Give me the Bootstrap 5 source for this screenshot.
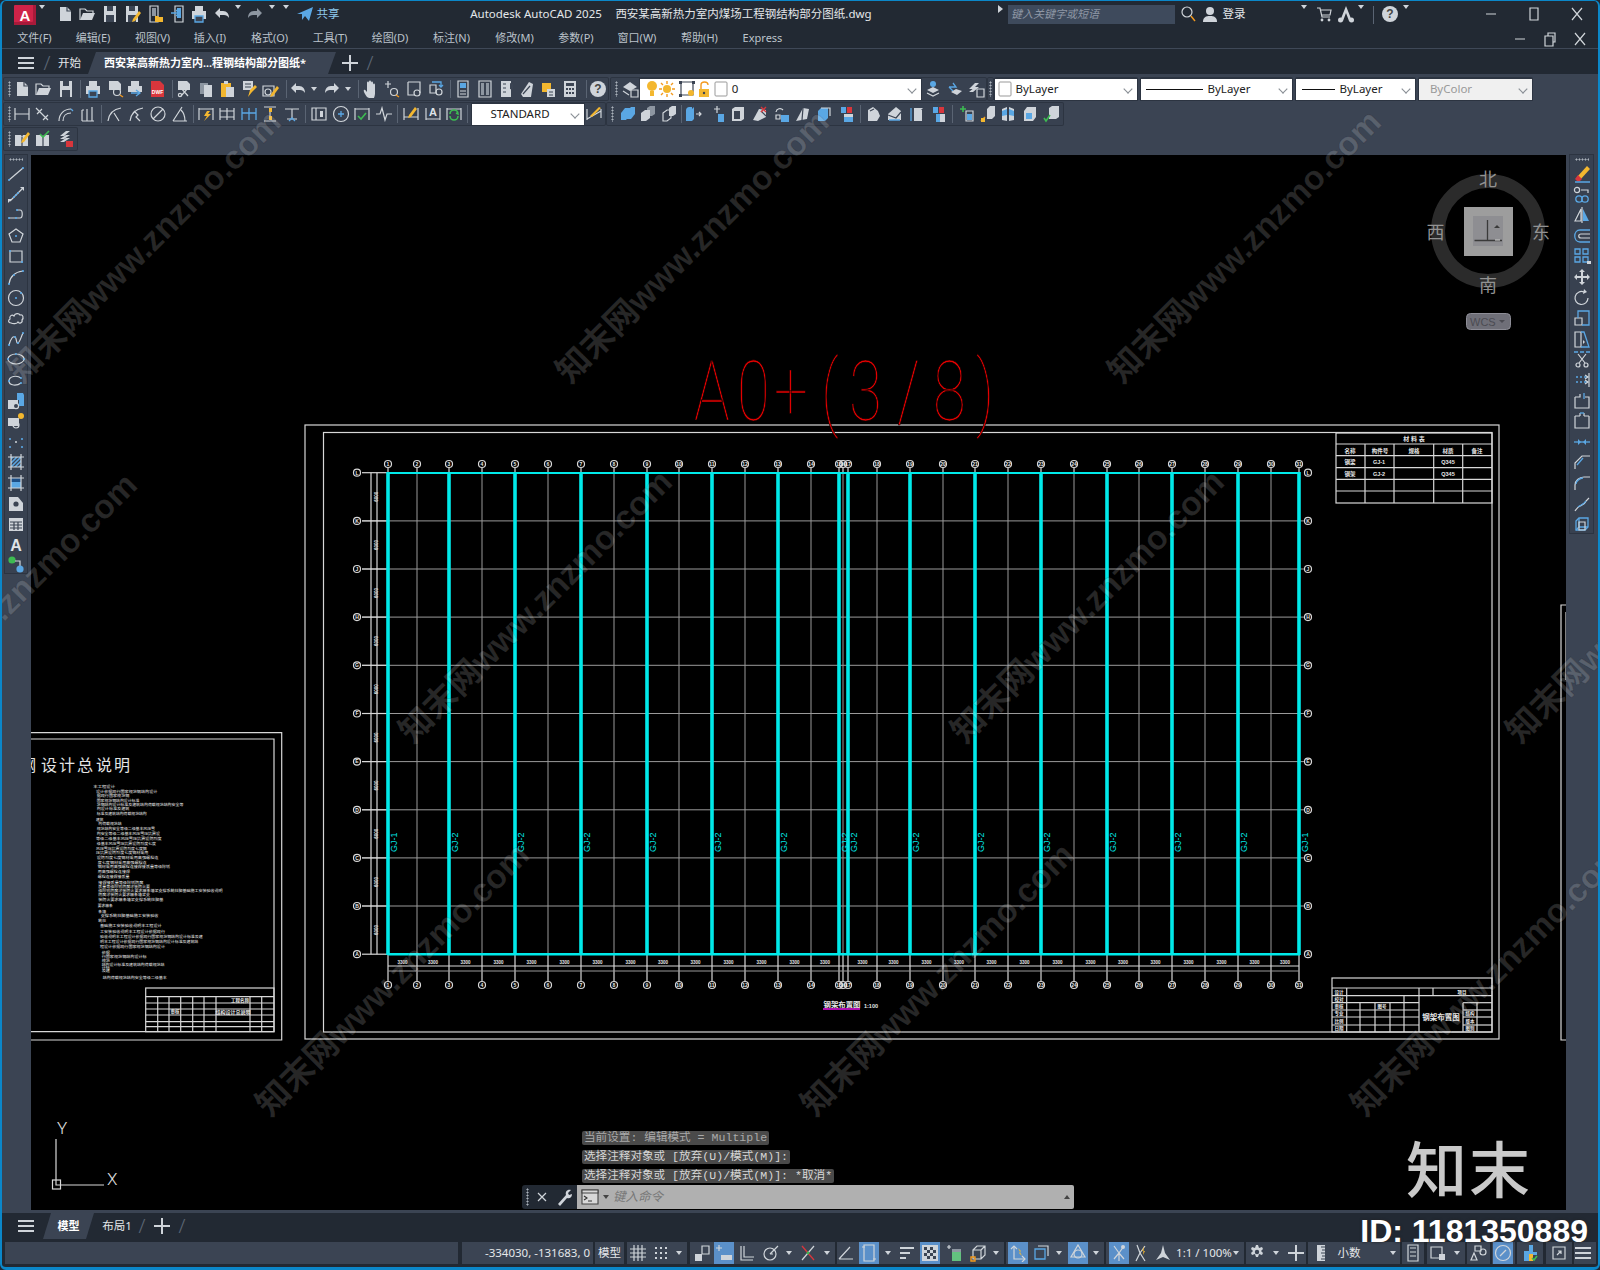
<!DOCTYPE html>
<html lang="zh">
<head>
<meta charset="UTF-8" />
<title>Autodesk AutoCAD 2025</title>
<link rel="stylesheet" href="https://cdn.jsdelivr.net/npm/bootstrap@5.3.2/dist/css/bootstrap.min.css" />
<style>
  html, body { width: 1600px; height: 1270px; overflow: hidden; background: #222933; }
  body { font-family: "Noto Sans", "Noto Sans CJK SC", sans-serif; font-size: 11.5px; color: #d4d9df; }
  .cad-win { width: 1600px; height: 1270px; position: relative; overflow: hidden; background: #222933; border: solid #0b87c9; border-width: 1px 2px 3px 2px; border-radius: 6px; }
  .h-title { height: 28px; } .h-menu { height: 19px; } .h-tabs { height: 25px; padding-top: 3px; }
  .menu-line { height: 1px; background: #3f4857; }
  .tools { height: 81px; background: #3b4453; padding-top: 4px; }
  .tool-row { height: 22px; margin-bottom: 3px; }
  .tool-grp { height: 22px; background: #384150; box-shadow: 0 0 0 1px #2c3441; border-radius: 1px; }
  .cell { flex: none; display: flex; align-items: center; justify-content: center; height: 100%; white-space: nowrap; }
  .cell svg { display: block; flex: none; }
  .cell-on { background: #5b90c9; }
  .cell-sep { background: #5a6473; height: 18px; align-self: center; }
  .grip { width: 3px; height: 16px; align-self: center; background-image: radial-gradient(#a9b1ba 45%, transparent 50%); background-size: 3px 3px; }
  .caret-dn { width: 0; height: 0; border: 3.5px solid transparent; border-top: 4px solid #cfd4da; border-bottom: 0; }
  .tri-rt { display: block; width: 0; height: 0; border: 4px solid transparent; border-left: 5px solid #cfd4da; border-right: 0; }
  .combo-box { height: 21px; width: 100%; background: #fff; color: #222; display: flex; align-items: center; position: relative; font-size: 11.5px; box-shadow: 0 0 0 1px #2c3441; }
  .combo-off { background: #f0f0f0; color: #999; }
  .combo-chev { position: absolute; right: 6px; top: 7px; width: 6px; height: 6px; border: solid #8a8f96; border-width: 0 1px 1px 0; transform: rotate(45deg) scale(1.1); }
  .combo-rule { height: 1px; background: #111; flex: none; }
  .cad-main { height: 1055px; }
  .side-strip { background: #3b4453; flex: none; }
  .side-l { width: 29px; padding: 0 4px 0 3px; }
  .side-r { width: 32px; padding: 0 5px 0 4px; }
  .side-l .cell { margin-left: -1px; }
  .side-bar { background: #384150; box-shadow: 0 0 0 1px #2c3441; padding-top: 3px; }
  .side-bar .grip-h { width: 14px; height: 3px; margin: 0 auto 4px; background-image: radial-gradient(#a9b1ba 45%, transparent 50%); background-size: 3px 3px; }
  .side-bar .cell { height: 18px; margin-bottom: 2.6px; }
  .cad-canvas { width: 1535px; height: 1055px; background: #000; position: relative; overflow: hidden; flex: none; }
  .cad-canvas > svg { display: block; }
  .strip { height: 3px; background: #3b4453; }
  .h-ltabs { height: 26px; }
  .status { height: 28px; padding-top: 3px; }
  .stat-grp { height: 22px; background: #3b4453; }
  .tab-on { height: 100%; background: #3b4453; clip-path: polygon(8px 0, 100% 0, calc(100% - 8px) 100%, 0 100%); color: #fff; font-weight: 600; font-size: 11px; display: flex; align-items: center; justify-content: center; }
  .tab-file { padding-right: 14px; }
  .slash { color: #5c6674; font-size: 20px; font-weight: 300; }
  .cad-logo { width: 22px; height: 20px; background: #cf2348; color: #fff; font: bold 15px "Liberation Sans", sans-serif; display: flex; align-items: center; justify-content: center; box-shadow: inset -3px -3px 0 #a81a3a; border-radius: 1px; }
  .find-box { width: 167px; height: 19px; background: #3e4a5c; color: #8e97a5; font-style: italic; font-size: 11px; display: flex; align-items: center; padding-left: 3px; }
  .share-txt { color: #8cc8ec; } .title-txt { color: #e4e7ea; }
  .menu-txt { color: #bcc3cb; font-size: 11px; }
  .ln-cad { stroke: #d8d8d8; stroke-width: 1.2; fill: none; }
  .ln-gry { stroke: #9a9a9a; stroke-width: 1; }
  .ln-cyan { stroke: #00eaea; }
  .txt-cad { fill: #e8e8e8; font-family: "Liberation Sans", "Noto Sans CJK SC", sans-serif; font-weight: 700; }
  .txt-note { fill: #f0f0f0; font-family: "Noto Sans CJK SC", sans-serif; font-size: 3.8px; font-weight: 400; }
  .txt-big { fill: #e4e4e4; font-family: "Noto Sans CJK SC", sans-serif; font-size: 16px; }
  .txt-a0 { fill: #e80000; stroke: #000; stroke-width: .7px; font-family: Roboto, sans-serif; font-weight: 100; font-size: 83px; }
  .txt-label { fill: #00e6e6; font-family: "Liberation Sans", sans-serif; font-size: 9px; }
  .txt-cube { fill: #929292; font-family: "Noto Sans CJK SC", sans-serif; font-size: 18px; text-anchor: middle; }
  .txt-ucs { fill: #e0e0e0; font-family: Roboto, sans-serif; font-weight: 300; font-size: 17px; }
  .txt-wcs { fill: #4b4b52; font: 11px "Liberation Sans", sans-serif; }
  .cmd-float { position: absolute; left: 491px; bottom: 1px; }
  .cmd-hist { margin: 0 0 2px 60px; gap: 5px; font: 11.6px "Liberation Mono", "Noto Sans CJK SC", monospace; }
  .cmd-line { height: 14px; line-height: 14px; padding: 0 2px; background: #4a4a4a; color: #d6d6d6; border-radius: 2px; white-space: pre; }
  .cmd-dim { color: #a9a9a9; }
  .cmd-tools { width: 55px; height: 24px; background: #222933; border-radius: 3px 0 0 3px; }
  .cmd-tools .grip { height: 18px; }
  .cmd-input { width: 497px; height: 24px; background: #b0b0b0; color: #777; border-radius: 0 2px 2px 0; font-style: italic; font-size: 12.5px; position: relative; }
  .cmd-input .caret-dn { border-top-color: #444; }
  .cmd-up { position: absolute; right: 4px; top: 10px; width: 0; height: 0; border: 3.5px solid transparent; border-bottom: 4px solid #444; border-top: 0; }
  .wm-layer { position: absolute; left: -2px; top: -1px; pointer-events: none; z-index: 5; }
  .wm-txt { fill: rgba(255, 255, 255, .17); stroke: rgba(0, 0, 0, .12); stroke-width: 1px; font: 700 33.5px "Liberation Sans", "Noto Sans CJK SC", sans-serif; }
  .stamp-cn { position: absolute; right: 66px; top: 1129px; font: 500 61px/1.2 "Noto Sans CJK SC", sans-serif; color: #c9c9c9; z-index: 6; letter-spacing: 2px; }
  .stamp-id { position: absolute; right: 10px; top: 1211px; font: 700 32px/1.2 "Liberation Sans", sans-serif; color: #fff; z-index: 6; white-space: nowrap; text-shadow: 0 0 3px #222; }
  .i-s { fill: none; stroke: #d0d5da; stroke-width: 1.2; }
  .i-f { fill: #cfd4da; }
  .i-b { fill: #5aa7e4; }
  .i-sb { fill: none; stroke: #5aa7e4; stroke-width: 1.3; }
  .i-y { fill: #f3b72f; }
  .i-o { fill: none; stroke: #f39a1e; stroke-width: 1.4; }
  .i-r { fill: #d8363c; }
  .i-rs { fill: none; stroke: #d8363c; stroke-width: 1.3; }
  .i-k { fill: #3b4453; }
  .i-n { fill: none; stroke: #3b4453; stroke-width: 1.2; }
  .i-g { fill: none; stroke: #3dbb52; stroke-width: 1.6; }
  .i-m { fill: #8d96a1; }
  .i-w { font: 700 5px "Liberation Sans", sans-serif; fill: #fff; }
  .i-big { font: 700 16px "Liberation Sans", sans-serif; fill: #dfe3e8; }
  .i-mid { font: 700 11px "Liberation Sans", sans-serif; fill: #dfe3e8; }
  .i-q { font: 700 12px "Liberation Sans", sans-serif; fill: #444; }
  .i-con { fill: #d8d8d8; stroke: #444; stroke-width: 1.1; }
  .i-conl { fill: none; stroke: #333; stroke-width: 1.1; }
</style>
</head>
<body>
<div class="cad-win" id="win"></div>
<script src="https://cdn.jsdelivr.net/npm/bootstrap@5.3.2/dist/js/bootstrap.bundle.min.js"></script>
<script>
// ---- icons, 18x18 ----
const P = (d, c = 's') => `<path class="i-${c}" d="${d}"/>`;
const D = (...pts) => pts.map(p => `<circle class="i-b" cx="${p[0]}" cy="${p[1]}" r="1.1"/>`).join('');
const dim = (x) => P('M2 3v12M16 3v12', 's') + x;
const PEN = P('M10 14l6-8 2 2-6 8-3 1z', 'y');
const SAVE = P('M3 1h12v16H3z', 'f') + P('M6 1h6v5H6zM5 10h8v7H5z', 'k');
const I = {
  new: P('M4 2h7l4 4v10H4z', 'f') + P('M11 2v4h4', 'n'),
  open: P('M2 15V4h5l2 2h6v2', 's') + P('M2 15l3-7h12l-3 7z', 'f'),
  save: SAVE, saveas: SAVE + PEN,
  webopen: P('M4 1h8v16H4z', 's') + P('M6 3h4v8H6z', 'm') + P('M9 11h3l1 1h4v5H9z', 'y'),
  websave: P('M6 1h8v16H6z', 's') + P('M8 3h4v10H8z', 'b') + P('M2 8h7M7 5l3 3-3 3', 'sb'),
  print: P('M5 1h8v5H5z', 'f') + P('M2 6h14v8H2z', 'f') + P('M5 11h8v6H5z', 'k') + P('M5 11h8v6H5z', 'sb'),
  undo: P('M7 3L2 8l5 5v-3h4c2 0 4 1 5 3 0-4-2-7-6-7H7z', 'f'),
  redo: P('M11 3l5 5-5 5v-3H7c-2 0-4 1-5 3 0-4 2-7 6-7h3z', 'f'),
  redod: P('M11 3l5 5-5 5v-3H7c-2 0-4 1-5 3 0-4 2-7 6-7h3z', 'm'),
  share: P('M1 9L17 2l-4 14-4-5-3 4v-6z', 'b'),
  find: `<circle class="i-s" cx="8" cy="7" r="5"/>` + P('M12 11l4 5', 'o'),
  user: `<circle class="i-f" cx="9" cy="6" r="4"/>` + P('M2 17c0-5 3-6 7-6s7 1 7 6z', 'f'),
  cart: P('M2 3h3l2 9h8M5 5h11l-1 5H7', 's') + `<circle class="i-f" cx="7" cy="15" r="1.4"/><circle class="i-f" cx="14" cy="15" r="1.4"/>`,
  aca: P('M9 1l6 15h-3L9 8l-3 8H3z', 'f') + `<circle class="i-f" cx="3.5" cy="15" r="2.5"/><circle class="i-f" cx="14.5" cy="15" r="2.5"/>`,
  help: `<circle class="i-f" cx="9" cy="9" r="8"/><text x="9" y="13" text-anchor="middle" class="i-q">?</text>`,
  min: P('M4 9h10'), max: P('M5 3h8v12H5z'), close: P('M4 3l10 12M14 3L4 15'),
  rest: P('M4 6h8v10H4zM7 6V3h7v9h-2'),
  burger: `<path class="i-f" d="M1 3h16v2H1zM1 8h16v2H1zM1 13h16v2H1z"/>`,
  x: P('M5 5l8 8M13 5l-8 8', 's'), plus: `<path class="i-f" d="M8 1h2v7h7v2h-7v7H8v-7H1V8h7z"/>`,
  preview: P('M3 1h9l3 3v6H3z', 'f') + `<circle class="i-s" cx="11" cy="12" r="3.5"/>` + P('M14 15l3 2', 'o'),
  publish: P('M5 1h8v5H5z', 'f') + P('M2 6h14v6H2z', 'f') + P('M5 13h8M10 10l4 3-4 3', 'sb'),
  dwf: P('M3 1h9l4 4v12H3z', 'r') + `<text x="9.5" y="14" text-anchor="middle" class="i-w">DWF</text>`,
  cut: P('M3 1h9l3 3v6H3z', 'f') + P('M6 8l7 8M13 8l-7 8', 's') + `<circle class="i-s" cx="5" cy="15" r="1.6"/>`,
  copy: P('M3 3h8v11H3z', 'm') + P('M7 5h8v12H7z', 'f'),
  paste: P('M3 3h10v14H3z', 'y') + P('M6 1h4v3H6z', 'f') + P('M8 7h8v10H8z', 'f'),
  match: P('M3 1h10v9H3z', 'f') + P('M5 4h6M5 7h6', 'n') + P('M8 17l2-7 5-5 2 2-5 5z', 'y'),
  block: P('M2 6h11v10H2z', 's') + `<circle class="i-s" cx="7" cy="12" r="3"/>` + PEN,
  hand: P('M5 17c-2-3-4-6-3-7s2 1 3 2V3c0-2 2-2 2 0v4-5c0-2 2-2 2 0v5-4c0-2 2-2 2 0v5-3c0-2 2-2 2 0v8c0 3-1 5-2 7z', 'f'),
  zrt: P('M5 1v7M2 4h6') + `<circle class="i-s" cx="11" cy="12" r="3.5"/>` + P('M13 15l3 2', 'o'),
  zwin: P('M3 2h12v11', 's') + P('M3 2v13h6') + `<circle class="i-s" cx="12" cy="13" r="3"/>`,
  zprev: P('M3 5h6v8H3z') + `<circle class="i-s" cx="12" cy="12" r="3"/>` + P('M5 2h9v5M12 5l2 2 2-2', 'sb'),
  props: P('M4 1h10v16H4z', 's') + P('M6 3h6v5H6z', 'b') + P('M6 11h6M6 14h6'),
  dcen: P('M3 1h12v16H3z', 's') + P('M5 3h3v12H5zM10 3h3v12h-3z', 'm'),
  tools: P('M4 1h10v16H4z', 'f') + P('M6 4h3M6 8h3M6 12h3', 'n') + P('M13 3l3 1v6l-3-1z', 'k'),
  sheet: P('M3 14L11 2l4 2-2 13H5z', 'f') + P('M5 14l7-8', 'n'),
  mark: P('M3 3h9v9H3z', 'y') + P('M8 9h8v8H8z', 'f') + P('M10 12h4M10 15h4', 'n'),
  calc: P('M3 1h12v16H3z', 'f') + P('M5 3h8v3H5z', 'k') + P('M5 8h2v2H5zM8 8h2v2H8zM11 8h2v2h-2zM5 12h2v2H5zM8 12h2v2H8zM11 12h2v2h-2z', 'k'),
  layer: P('M2 7l7-5 7 5-7 4z', 'f') + P('M10 10h7v7h-7z', 's') + P('M2 11l6 4', 's'),
  bulb: `<circle class="i-y" cx="9" cy="6" r="5"/>` + P('M7 11h4v5H7z', 'y'),
  sun: `<circle class="i-y" cx="9" cy="9" r="4"/>` + P('M9 1v3M9 14v3M1 9h3M14 9h3M3 3l2 2M13 13l2 2M15 3l-2 2M5 13l-2 2', 'o'),
  frz: P('M3 2h12v13H3z', 'n') + P('M1 1h3v3H1zM14 1h3v3h-3zM1 14h3v3H1z', 'k') + `<circle class="i-y" cx="13" cy="13" r="3"/>`,
  lock: P('M3 9h10v8H3z', 'y') + P('M5 9V5c0-4 7-4 7 0', 'o') + `<circle class="i-k" cx="8" cy="13" r="1.2"/>`,
  sq: `<rect x="3" y="2" width="12" height="14" rx="1" fill="#fff" stroke="#999"/>`,
  lay1: `<circle class="i-b" cx="9" cy="4" r="3"/>` + P('M3 10l6-3 6 3-6 3z', 'f') + P('M3 13l6 3 6-3', 's'),
  lay2: P('M3 7h7L7 3M3 7l4 4', 'sb') + P('M5 12l5-3 6 2-5 4z', 'f'),
  lay3: P('M2 9l6-6h4l-6 6zM2 12l6-5h4l-6 5z', 'f') + P('M10 9h7v8h-7z', 's'),
  dl: dim(P('M2 9h14')), da: P('M2 3l12 12M3 9l5-5M9 15l5-5'),
  darc: P('M2 16c0-7 5-12 12-12M6 16c0-5 3-8 8-8') + P('M14 4l2 2', 'sb'),
  dord: P('M3 16h12M3 16V5M8 4v12M13 2v14M3 5h2'),
  drad: P('M2 16C3 8 8 4 15 3M8 8l5 8'),
  djog: P('M2 16C3 8 8 4 15 3M6 6l4 4-2 2 4 4'),
  ddia: `<circle class="i-s" cx="9" cy="9" r="7"/>` + P('M4 14L14 4'),
  dang: P('M2 16L11 2M2 16h14M10 5c3 3 4 7 4 11'),
  dq: dim(P('M2 4h14', 's') + P('M10 6l-3 5h3l-3 5 7-7h-3l2-3z', 'y')),
  dbase: dim(P('M2 6h14M9 3v12M2 12h14')),
  dcont: P('M2 3v12M9 3v12M16 3v12M2 8h14', 'sb'),
  dbreak: P('M3 2h12M3 16h12', 's') + P('M8 3h3v4H8zM8 11h3v4H8z', 'y') + P('M9 7v4', 's'),
  dtol: P('M2 4h14M9 4v10M4 14h10') + P('M6 16l3-3 3 3', 'sb'),
  dtol2: P('M2 3h14v12H2z') + P('M6 3v12') + P('M10 6h3v6h-3z', 'f'),
  dcen2: `<circle class="i-s" cx="9" cy="9" r="7.5"/>` + P('M9 6v6M6 9h6', 'sb'),
  dins: dim(P('M2 4h14') + P('M5 11l3 3 5-6', 'g')),
  jog: P('M1 9h4l2-6 3 12 2-6h5'),
  dedit: dim(P('M2 12h14') + P('M7 10l6-8 2 2-6 8-3 1z', 'y')),
  dtedit: dim(P('M2 14h14') + `<text x="9" y="11" text-anchor="middle" class="i-mid">A</text>`),
  dupd: dim(P('M2 4h14') + P('M5 9a4 4 0 0 1 8 0l-2-1M13 11a4 4 0 0 1-8 0', 'g')),
  dstyle: P('M2 14l14-8M2 4v11M16 4v9') + P('M5 11l9-9 2 1-9 9z', 'y'),
  c1: P('M2 8l4-5h5v7l-4 5H2z', 'b') + P('M8 6l4-4h4v7l-4 5H8z', 'b'),
  c2: P('M8 3l3-2h5v8l-3 2H8z', 'm') + P('M2 8l4-3h5v8l-4 3H2z', 'f'),
  c3: P('M9 3l3-2h4v8l-3 2H9z', 'f') + P('M3 8l4-3h4v8l-4 3H3z', 's'),
  c4: P('M2 16V5c0-2 2-3 3-3h3v14zM8 4l2-2v12l-2 2z', 'b') + P('M12 9h5M15 7l2 2-2 2', 's'),
  c5: P('M9 1v7M6 4h6', 's') + P('M10 9h6v8h-6z', 'b'),
  c6: P('M3 4l3-2h9v12l-3 2H3z', 'f') + P('M5 6h6v8H5z', 'k'),
  c7: P('M2 15L8 4l7 1v7L7 16z', 'f') + P('M10 6l5 5', 'n') + P('M10 2l5 5M15 2l-5 5', 'rs'),
  c8: P('M3 7a4 4 0 0 1 7-2', 's') + P('M8 10h8v7H8z', 'b') + P('M3 10h4v4H3z', 's'),
  c9: P('M2 16L9 3l6 1-2 10z', 'f') + P('M9 3l-1 12', 'n') + P('M4 14l5 3', 'b'),
  c10: P('M3 6l3-3h7v10l-3 3H3z', 'b') + P('M6 3h9v8', 's'),
  c11: P('M3 2h5v6H3z', 'b') + P('M9 2h5v6H9z', 'r') + P('M6 9h9v8H6z', 'b') + P('M6 9h9v3H6z', 'f'),
  c12: P('M3 15V5l5-3 5 4 2 5-3 5H3z', 'f') + P('M5 6l4-2', 'n'),
  c13: P('M2 15V9l8-7 5 4v9z', 'f') + P('M2 10l8 3 5-6', 'n') + P('M3 15h11', 'sb'),
  c14: P('M6 3h9l-2 2H6z', 'f') + P('M6 5h8v11H6z', 'f') + P('M3 3v13', 'sb'),
  c15: P('M3 2h5v6H3z', 'b') + P('M9 2h5v6H9z', 'r') + P('M6 9h9v8H6z', 'f') + P('M6 9h4v8H6z', 'b'),
  c16: P('M6 1v6M3 4h6', 'g') + P('M9 6h7v10H9z', 's') + P('M10 9h5v6h-5z', 'b'),
  c17: P('M8 4l3-3h5v10l-3 3H8z', 'f') + P('M2 16l4-4', 'o') + P('M2 13h4v4H2z', 'y'),
  c18: P('M3 4l5-2v14l-5-1zM10 2l5 2v11l-5 1z', 'f') + P('M3 6l5-2v6l-5 1z', 'b') + P('M10 4l5 2v5l-5-1z', 'b'),
  c19: P('M3 6l3-4h9v10l-3 4H3z', 'f') + P('M5 8h6v6H5z', 'b'),
  c20: P('M6 3l3-2h7v11l-3 2H6z', 'f') + P('M1 13l2 3 4-6', 'g'),
  m1: P('M2 5h6l1 2 1-2h5v11H2z', 'f') + P('M9 7v9', 'n') + P('M9 10l6-8 2 2-6 8-3 1z', 'y'),
  m2: P('M2 5h6l1 2 1-2h5v11H2z', 'f') + P('M9 7v9', 'n') + P('M6 4l3 3 6-6', 'g'),
  m3: P('M3 6l6-5h4l-6 5zM3 9l6-4h4l-6 4zM3 12l6-4h4l-6 4z', 'f') + P('M9 11h7v6H9z', 'r'),
  grid: P('M5 1v16M9 1v16M13 1v16M1 5h16M1 9h16M1 13h16'),
  dots: `<path class="i-f" d="M3 3h2v2H3zM8 3h2v2H8zM13 3h2v2h-2zM3 8h2v2H3zM8 8h2v2H8zM13 8h2v2h-2zM3 13h2v2H3zM8 13h2v2H8zM13 13h2v2h-2z"/>`,
  snap: P('M9 2h7v8H9z', 's') + P('M2 10h7v7H2z', 'f'),
  infer: P('M4 1v6M1 4h6') + P('M6 11h11v5H6z', 'f'),
  ortho: P('M3 2v14h12') + P('M6 2v11h10'),
  polar: `<circle class="i-s" cx="9" cy="10" r="6"/>` + P('M9 10l8-8M12 10h-3', 's'),
  osnap: P('M3 2l12 14', 'rs') + P('M3 16L15 2', 's') + `<circle class="i-g" cx="9" cy="9" r="0.6"/>`,
  angle: P('M2 15L13 3M2 15h14'),
  iso: P('M4 1h10v16H4z', 's') + P('M2 3h3M13 15h3'),
  lw: `<path class="i-f" d="M2 3h14v2H2zM2 8h10v2H2zM2 13h6v2H2z"/>`,
  trans: P('M1 1h16v16H1z', 'f') + P('M3 3h3v3H3zM9 3h3v3H9zM6 6h3v3H6zM12 6h3v3h-3zM3 9h3v3H3zM9 9h3v3H9zM6 12h3v3H6zM12 12h3v3h-3z', 'k'),
  cycle: P('M1 3h4M3 1v4') + P('M6 5h9v12H6z', 'm') + `<path d="M6 8h9v9H6z" fill="#63c17f"/>`,
  iso3d: P('M3 6l4-4h8v9l-4 4H3zM3 6h8v9M11 6l4-4') + P('M1 13h4v4H1z', 'o'),
  ucs: P('M5 2v13h11') + P('M2 5l3-3 3 3M13 12l3 3-3 3', 's') + P('M9 4l3 3-2 2 3 3', 'y'),
  ucs2: P('M3 5h10v10H3z', 'sb') + P('M6 2h10v10', 's'),
  gizmo: P('M9 1l7 12H2z') + `<circle class="i-s" cx="9" cy="10" r="4"/>`,
  anno: P('M9 17V9M9 9L4 2M9 9l5-7M9 9l5 6M9 9l-5 6', 's') + `<circle class="i-f" cx="13" cy="3" r="2"/>`,
  anno2: P('M4 17l4-8 5 8M8 9L5 1M8 9l5-7', 's') + P('M12 2l-2 5h3l-2 4', 'y'),
  anno3: P('M9 1l2 8 5 7-7-3-7 3 5-7z', 'f'),
  gear: P('M8 1h2l1 3 3-1 1 2-2 2 2 2-1 2-3-1-1 3H8l-1-3-3 1-1-2 2-2-2-2 1-2 3 1z', 'f') + `<circle class="i-k" cx="9" cy="8" r="2.2"/>`,
  ruler: P('M5 1h8v16H5z', 'f') + P('M9 3h4M10 6h3M9 9h4M10 12h3M9 15h4', 'n'),
  list: P('M4 1h10v16H4z', 's') + P('M6 4h6M6 8h6M6 12h6', 's'),
  wspace: P('M2 3h11v11H2z', 's') + P('M10 10h6v6h-6z', 'f'),
  hw: P('M6 2h6v5H6z', 's') + `<circle class="i-s" cx="14" cy="8" r="3"/>` + P('M5 9l3 7H2z', 's'),
  isol: `<circle class="i-s" cx="9" cy="9" r="7.5"/>` + P('M6 12l6-6', 's'),
  prop2: P('M8 1h4v7h4v3h-4v2H8zM3 7h5v10H3z', 'b') + P('M8 10h4v7H8z', 'y') + P('M11 14l2 2 3-4', 'g'),
  full: P('M3 3h12v12H3z', 's') + P('M7 11l4-4M8 7h3v3', 's'),
  console: P('M1 2h16v14H1z', 'con') + P('M1 2h16v3H1z', 'con') + P('M3 8l3 2-3 2M7 13h4', 'conl'),
  wrench: P('M3 16L11 7c-1-3 1-6 5-5l-3 3 1 2 3-1c0 4-3 5-5 4l-7 8z', 'f'),
  line: P('M2 15L16 3', 's') + D([2, 15], [16, 3]),
  cline: P('M3 15L15 3', 's') + `<path class="i-f" d="M13 1h4v4zM1 17v-4h4z"/>` + D([7, 11], [11, 7], [9, 9]),
  pline: P('M2 12h7M10 4h3c3 0 3 8 0 8h-4', 's') + D([2, 12], [9, 12], [10, 4]),
  polyg: P('M9 2l7 5-3 8H5L2 7z', 's') + D([9, 9]),
  rect: P('M3 4h12v11H3z', 's') + D([3, 4], [15, 15]),
  arc: P('M2 16C3 8 8 4 16 3', 's') + D([2, 16], [16, 3], [7, 7]),
  circle: `<circle class="i-s" cx="9" cy="9" r="7.5"/>` + D([9, 9], [14, 4]),
  cloud: P('M4 14c-3 0-3-3-1-4-1-3 2-5 4-3 1-3 5-3 6-1 3-1 4 3 2 5 1 3-3 4-4 2-1 2-5 2-7 1z', 's'),
  spline: P('M2 15c2-7 4-9 6-8s1 7 3 6 3-6 5-10', 's') + D([2, 15], [8, 7], [11, 13], [16, 3]),
  ellip: `<ellipse class="i-s" cx="9" cy="9" rx="8" ry="5"/>` + D([1, 9], [17, 9], [9, 4]),
  earc: P('M14 12c-4 3-12 3-12-2s8-6 12-3', 's') + D([14, 12], [14, 7], [2, 10]),
  ins: P('M1 8h10v9H1z', 'f') + `<circle class="i-k" cx="9" cy="14" r="2.6"/><circle class="i-s" cx="9" cy="14" r="2.6"/>` + P('M10 1h6l1 2v11h-5V8h-2z', 'b'),
  mkblk: P('M1 6h11v8H1z', 'f') + `<circle class="i-s" cx="9" cy="13" r="3"/>` + `<circle class="i-y" cx="14" cy="4" r="3"/>`,
  point: D([3, 6], [15, 6], [3, 14], [15, 14]) + `<circle class="i-f" cx="9" cy="9" r="1"/>`,
  hatch: P('M4 4h10v10H4z', 'b') + P('M4 8l4-4M4 12l8-8M6 14l8-8M10 14l4-4', 'n') + P('M1 4h16M1 14h16M4 1v16M14 1v16'),
  grad: `<rect x="4" y="4" width="10" height="10" fill="#5aa7e4"/><rect x="4" y="4" width="10" height="4" fill="#1d4f86"/>` + P('M1 4h16M1 14h16M4 1v16M14 1v16'),
  region: P('M2 2h9l5 6v8H2z', 'f') + `<circle class="i-k" cx="9" cy="9" r="2.6"/>`,
  table: P('M2 3h14v13H2z', 'f') + P('M3 7h12M3 10h12M3 13h12M7 7v8M11 7v8', 'n'),
  mtext: `<text x="9" y="15" text-anchor="middle" class="i-big">A</text>`,
  addsel: `<circle cx="5" cy="4" r="3.6" fill="#3dbb52"/>` + P('M8 5h5v5', 's') + `<circle class="i-b" cx="13" cy="13" r="3.6"/>`,
  erase: P('M4 12L14 1l3 3-10 11z', 'y') + P('M2 14l3-4 4 4-2 2H4z', 'r') + P('M2 17h15', 'sb'),
  rcopy: `<circle class="i-s" cx="4" cy="4" r="2.6"/>` + P('M8 4h7v3', 's') + `<circle class="i-sb" cx="6" cy="13" r="3.2"/><circle class="i-sb" cx="12" cy="13" r="3.2"/>`,
  mirror: P('M2 15L8 3v12z', 's') + P('M10 3l6 12h-6z', 'b') + P('M9 1v16', 's'),
  offset: P('M17 3H7c-7 0-7 12 0 12h10', 'sb') + P('M17 7H8c-3 0-3 4 0 4h9', 's'),
  array: P('M2 2h5v5H2zM10 2h5v5h-5zM2 10h5v5H2zM10 10h5v5h-5z', 'sb') + P('M14 14h4v3h-4z', 'f'),
  move: P('M9 1l3 3h-2v4h4V6l3 3-3 3v-2h-4v4h2l-3 3-3-3h2v-4H4v2L1 9l3-3v2h4V4H6z', 'f'),
  rot: P('M15 9a6.5 6.5 0 1 1-4-6', 's') + P('M11 0l3 3-4 2z', 'f'),
  scale: P('M2 9h7v7H2z', 's') + P('M5 9V2h11v14H9', 'sb'),
  stretch: P('M2 2h6v15H2z', 's') + P('M8 2h3l5 15H8', 'sb') + P('M5 12h7M10 10l2 2-2 2', 'f'),
  trim: P('M1 2h4M7 2h4M13 2h4', 'sb') + P('M5 4l7 9M13 4l-7 9', 's') + `<circle class="i-s" cx="5" cy="15" r="2"/><circle class="i-s" cx="13" cy="15" r="2"/>`,
  ext: P('M16 2v14', 's') + P('M3 6h2M7 6h2M11 6h4M3 11h2M7 11h2M11 11h4', 'sb') + P('M12 4l3 2-3 2M12 9l3 2-3 2', 's'),
  brkp: P('M2 5h5v-3M2 5v11h14V5h-4', 's') + P('M11 1v6', 'sb'),
  brk: P('M2 4v12h14V4', 's') + P('M2 4h5M11 4h5M7 4V1M11 4V1', 's') + P('M7 1h4', 'sb'),
  join: P('M1 9h16', 'sb') + P('M5 6l3 3-3 3zM13 6l-3 3 3 3z', 'b'),
  chamf: P('M2 16v-6l7-7h8', 's') + P('M4 12l6-7', 'sb'),
  fil: P('M2 16v-5c0-4 4-8 9-8h6', 's') + P('M3 10c0-3 4-6 7-6', 'sb'),
  blend: P('M2 16c2-3 3-4 5-5s5-2 6-5l3-3', 's') + P('M5 12c3-2 6-3 8-6', 'sb'),
  expl: P('M3 6l3-3h9v9l-3 3H3z', 'sb') + P('M6 3v9l-3 3M6 12h9', 'sb') + P('M6 7h6v8H6z', 's'),
};
function svg(n) { return `<svg width="18" height="18" viewBox="0 0 18 18" aria-hidden="true">${I[n] || ''}</svg>`; }

// one run of cells placed by the x of their centres; the gaps between them are computed
function cells(x0, items) {
  let cur = x0, out = '';
  for (const it of items) {
    const [cx, n, w0, raw] = it;
    let w = 18, cls = 'cell', inner = '';
    if (n === '|') { w = 1; cls += ' cell-sep'; }
    else if (n === 'v') { w = 7; inner = '<span class="caret-dn"></span>'; }
    else if (n === '::') { w = 3; cls = 'grip flex-none'; }
    else if (n === 'txt') { w = w0; inner = raw; }
    else if (n.endsWith('*')) { w = 20; cls += ' cell-on'; inner = svg(n.slice(0, -1)); }
    else inner = svg(n);
    const ml = +(cx - w / 2 - cur).toFixed(1);
    out += `<div class="${cls}" style="margin-left:${ml}px;width:${w}px">${inner}</div>`;
    cur = cx + w / 2;
  }
  return out;
}
function row(groups, cls, grpCls) {
  let cur = 2, out = '';
  for (const [a, b, items] of groups) {
    out += `<div class="d-flex flex-none ${grpCls}" style="margin-left:${+(a - cur).toFixed(1)}px;width:${b - a}px">${cells(a, items)}</div>`;
    cur = b;
  }
  return `<div class="d-flex ${cls}">${out}</div>`;
}
const T = (cx, w, txt, c = '') => [cx, 'txt', w, `<span class="${c}">${txt}</span>`];
const CHEV = '<span class="combo-chev"></span>';
const combo = (cx, w, inner, off) => [cx, 'txt', w, `<div class="combo-box ${off ? 'combo-off' : ''}">${inner}${CHEV}</div>`];
const rule = (ml, w) => `<span class="combo-rule" style="margin-left:${ml}px;width:${w}px"></span>`;

const titleBar = row([[2, 1598, [
  [25, 'txt', 22, '<div class="cad-logo">A</div>'], [42, 'v'],
  [65, 'new'], [87, 'open'], [110, 'save'], [132, 'saveas'], [155, 'webopen'], [178, 'websave'], [199, 'print'],
  [222, 'undo'], [238, 'v'], [255, 'redod'], [272, 'v'], [286, 'v'], [305, 'share'], T(328, 24, '共享', 'share-txt'),
  T(536, 134, 'Autodesk AutoCAD 2025', 'title-txt'), T(743.5, 251, '西安某高新热力室内煤场工程钢结构部分图纸.dwg', 'title-txt'),
  [1000, 'txt', 5, '<span class="tri-rt"></span>'],
  [1091.5, 'txt', 167, '<div class="find-box">键入关键字或短语</div>'],
  [1188, 'find'], [1210, 'user'], T(1234, 24, '登录', 'title-txt'), [1304, 'v'], [1324, 'cart'], [1346, 'aca'], [1361, 'v'], [1373, '|'], [1390, 'help'], [1406, 'v'],
  [1491, 'min'], [1534, 'max'], [1577, 'close'],
]]], 'h-title align-items-center', '');
const menuItems = [[34.5, 36, '文件(F)'], [93, 36, '编辑(E)'], [152.5, 38, '视图(V)'], [210, 34, '插入(I)'], [269.5, 40, '格式(O)'], [330, 36, '工具(T)'], [390, 38, '绘图(D)'], [451.5, 40, '标注(N)'], [514.5, 42, '修改(M)'], [576, 37, '参数(P)'], [637, 43, '窗口(W)'], [699.5, 38, '帮助(H)'], [762.5, 44, 'Express']];
const menuBar = row([[2, 1598, menuItems.map(m => T(m[0], m[1], m[2], 'menu-txt')).concat([[1520, 'min'], [1550, 'rest'], [1580, 'close']])]], 'h-menu', '');
const tabBar = row([[2, 1598, [
  [26, 'burger'], T(47, 8, '/', 'slash'), T(69.5, 24, '开始', 'title-txt'),
  [212, 'txt', 248, '<div class="tab-on tab-file w-100">西安某高新热力室内...程钢结构部分图纸*</div>'],
  [320, 'x'], [350, 'plus'], T(370, 8, '/', 'slash'),
]]], 'h-tabs', '');

const layerCombo = combo(780.5, 281, cells(640, [[652, 'bulb'], [667, 'sun'], [687, 'frz'], [705, 'lock'], [721, 'sq'], T(735, 8, '0')]));
const row1 = row([
  [4, 608, [[9, '::'], [22, 'new'], [43, 'open'], [66, 'save'], [80, '|'], [93, 'print'], [115, 'preview'], [135, 'publish'], [157, 'dwf'], [172, '|'], [184, 'cut'], [206, 'copy'], [227, 'paste'], [249, 'match'], [270, 'block'], [286, '|'], [298, 'undo'], [314, 'v'], [332, 'redo'], [348, 'v'], [358, '|'], [371, 'hand'], [392, 'zrt'], [414, 'zwin'], [436, 'zprev'], [450, '|'], [463, 'props'], [485, 'dcen'], [506, 'tools'], [527, 'sheet'], [548, 'mark'], [570, 'calc'], [586, '|'], [598, 'help']]],
  [611, 986, [[616, '::'], [630, 'layer'], layerCombo, [933, 'lay1'], [955, 'lay2'], [976, 'lay3']]],
  [988, 993, [[990, '::']]],
  [995, 1137, [combo(1066, 142, cells(995, [[1005, 'sq'], T(1037, 44, 'ByLayer')]))]],
  [1141, 1292, [combo(1216.5, 151, rule(5, 57) + cells(1203, [T(1229, 44, 'ByLayer')]))]],
  [1296, 1415, [combo(1355.5, 119, rule(6, 33) + cells(1335, [T(1361, 44, 'ByLayer')]))]],
  [1419, 1532, [combo(1475.5, 113, cells(1419, [T(1451, 44, 'ByColor')]), true)]],
], 'tool-row', 'tool-grp');
const row2 = row([
  [4, 605, [[9, '::'], [22, 'dl'], [43, 'da'], [66, 'darc'], [88, 'dord'], [101, '|'], [115, 'drad'], [137, 'djog'], [158, 'ddia'], [180, 'dang'], [193, '|'], [206, 'dq'], [227, 'dbase'], [249, 'dcont'], [270, 'dbreak'], [292, 'dtol'], [305, '|'], [319, 'dtol2'], [341, 'dcen2'], [362, 'dins'], [384, 'jog'], [397, '|'], [411, 'dedit'], [433, 'dtedit'], [454, 'dupd'], [467, '|'],
    combo(528, 112, '<span class="w-100 text-center pe-3">STANDARD</span>'), [594, 'dstyle']]],
  [607, 1063, [[612, '::'], [628, 'c1'], [648, 'c2'], [669, 'c3'], [681, '|'], [693, 'c4'], [717, 'c5'], [738, 'c6'], [760, 'c7'], [782, 'c8'], [803, 'c9'], [824, 'c10'], [847, 'c11'], [860, '|'], [874, 'c12'], [895, 'c13'], [917, 'c14'], [939, 'c15'], [952, '|'], [966, 'c16'], [988, 'c17'], [1008, 'c18'], [1030, 'c19'], [1052, 'c20']]],
], 'tool-row', 'tool-grp');
const row3 = row([[4, 77, [[9, '::'], [22, 'm1'], [43, 'm2'], [66, 'm3']]]], 'tool-row', 'tool-grp');

const sideBar = (names, h) => `<div class="side-bar" style="height:${h}px"><div class="grip-h"></div>${names.map(n => `<div class="cell">${svg(n)}</div>`).join('')}</div>`;
const leftBar = sideBar(['line', 'cline', 'pline', 'polyg', 'rect', 'arc', 'circle', 'cloud', 'spline', 'ellip', 'earc', 'ins', 'mkblk', 'point', 'hatch', 'grad', 'region', 'table', 'mtext', 'addsel'], 418);
const rightBar = sideBar(['erase', 'rcopy', 'mirror', 'offset', 'array', 'move', 'rot', 'scale', 'stretch', 'trim', 'ext', 'brkp', 'brk', 'join', 'chamf', 'fil', 'blend', 'expl'], 378);

// ---- the drawing, in page coordinates ----
const S = [];
const L = (x1, y1, x2, y2, c = 'ln-cad', w) => S.push(`<line x1="${x1}" y1="${y1}" x2="${x2}" y2="${y2}" class="${c}"${w ? ` stroke-width="${w}"` : ''}/>`);
const R = (x1, y1, x2, y2) => S.push(`<rect x="${x1}" y="${y1}" width="${x2 - x1}" height="${y2 - y1}" class="ln-cad"/>`);
const TX = (x, y, size, t, anchor = 'middle', extra = '') => S.push(`<text x="${x}" y="${y}" font-size="${size}" text-anchor="${anchor}" class="txt-cad" ${extra}>${t}</text>`);

R(305, 425, 1499, 1039); R(323.5, 432.5, 1492, 1032);
const cols = [388, 417, 449, 482, 515, 548, 581, 614, 647, 679, 712, 745, 778, 811, 839, 843, 848, 877, 910, 943, 975, 1008, 1041, 1074, 1107, 1139, 1172, 1205, 1238, 1271, 1299];
const cyan = new Set([388, 449, 515, 581, 647, 712, 778, 839, 848, 910, 975, 1041, 1107, 1172, 1238, 1299]);
const rows = Array.from({ length: 11 }, (_, k) => +(472.7 + 48.15 * k).toFixed(1));
rows.forEach((y, k) => {
  if (k && k < 10) L(362, y, 1304, y, 'ln-gry');
  L(362, y, 388, y, 'ln-cad');
  S.push(`<circle cx="357" cy="${y}" r="3.5" class="ln-cad"/><circle cx="1308" cy="${y}" r="3.5" class="ln-cad"/>`);
  TX(357, y + 1.8, 5, 'ABCDEFGHJKL'[10 - k]); TX(1308, y + 1.8, 5, 'ABCDEFGHJKL'[10 - k]);
  if (k < 10) TX(376, y + 26, 4.5, '6000', 'middle', `transform="rotate(-90 376 ${y + 24})"`);
});
L(371, 472.7, 371, 954.3); L(377, 472.7, 377, 954.3);
cols.forEach((x, i) => {
  if (!cyan.has(x)) L(x, 473, x, 954, 'ln-gry');
  L(x, 468, x, 473); L(x, 954, x, 981);
  S.push(`<circle cx="${x}" cy="464" r="3.5" class="ln-cad"/><circle cx="${x}" cy="985" r="3.5" class="ln-cad"/>`);
  TX(x, 466, 5, i + 1); TX(x, 987, 5, i + 1);
  if (i < cols.length - 1 && cols[i + 1] - x > 8) TX((x + cols[i + 1]) / 2, 964, 4.5, '3300');
});
L(388, 966, 1299, 966); L(388, 971, 1299, 971, 'ln-gry');
L(388, 473, 1300, 473, 'ln-cyan', 2.2);
L(388, 954.3, 1300, 954.3, 'ln-cyan', 2.4);
cyan.forEach(x => L(x, 472, x, 955, 'ln-cyan', 3.6));
[...cyan].forEach((x, i, a) => S.push(`<text class="txt-label" transform="translate(${x + 9} 852) rotate(-90)">${i === 0 || i === a.length - 1 ? 'GJ-1' : 'GJ-2'}</text>`));

// sheet title
TX(842, 1006.5, 7.4, '钢架布置图');
S.push('<line x1="823" y1="1009" x2="860" y2="1009" stroke="#e814e8" stroke-width="1.6"/>');
TX(871, 1008, 5.5, '1:100');

// material table, top right
S.push('<rect x="1336" y="433" width="156" height="70" class="ln-cad"/>');
[444, 455.7, 467.7, 479.3, 491].forEach(y => L(1336, y, 1492, y));
[1365, 1394, 1433.7, 1462.7].forEach(x => L(x, 444, x, 503));
TX(1414, 441, 6, '材 料 表');
['名称', '构件号', '规格', '材质', '备注'].forEach((t, i) => TX([1350, 1380, 1414, 1448, 1477][i], 452.5, 5.5, t));
[['钢梁', 'GJ-1', 'Q345'], ['钢架', 'GJ-2', 'Q345']].forEach((r, i) => { const y = 464 + i * 11.8; TX(1350, y, 5.5, r[0]); TX(1379, y, 5.5, r[1]); TX(1448, y, 5.5, r[2]); });

// title block, bottom right
S.push('<rect x="1332" y="978" width="160" height="54" class="ln-cad"/>');
L(1332, 988, 1492, 988); L(1332, 995.7, 1492, 995.7); L(1332, 1002.7, 1419, 1002.7); L(1463, 1002.7, 1492, 1002.7);
L(1332, 1010, 1419, 1010); L(1332, 1017, 1419, 1017); L(1332, 1025, 1419, 1025); L(1463, 1010, 1492, 1010); L(1463, 1017, 1492, 1017); L(1463, 1025, 1492, 1025);
L(1346.7, 988, 1346.7, 1032); L(1404, 995.7, 1404, 1032); L(1419, 988, 1419, 1032); L(1433, 988, 1433, 995.7);
[1360, 1375, 1390].forEach(x => L(x, 1002.7, x, 1032)); [1463, 1477].forEach(x => L(x, 1002.7, x, 1032));
TX(1441, 1020, 7.5, '钢架布置图');
[['设计', 1339, 994], ['校对', 1339, 1001], ['审核', 1339, 1008], ['专业', 1339, 1015], ['比例', 1339, 1023], ['日期', 1339, 1030], ['图号', 1382, 1008], ['结构', 1470, 1015], ['版本', 1470, 1023], ['图别', 1470, 1030], ['项目', 1462, 994]].forEach(t => TX(t[1], t[2], 4.5, t[0]));

// left sheet
S.push(`<path class="ln-cad" d="M30 732.7H281.7V1040H30M30 739H274V1031.7H30"/>`);
S.push('<text class="txt-big" y="771" x="20 41 59 77 96 114">钢设计总说明</text>');
const NOTE = '本工程设计依据现行国家规范钢结构设计标准及建筑结构荷载规范结构安全等级二级基本风压雪压抗震设防烈度七度钢材采用高强螺栓连接焊接质量等级除锈防腐涂装防火要求檩条墙梁支撑系统柱脚基础施工安装验收说明';
[[190, 255, 170], [198, 382, 183], [200, 298, 197], [200, 328, 210], [200, 460, 223], [200, 298, 236], [200, 350, 250], [198, 220, 267], [205, 275, 281], [200, 375, 296], [200, 390, 311], [198, 395, 326], [200, 378, 341], [198, 350, 354], [198, 355, 368], [200, 385, 382], [203, 350, 396], [203, 420, 409], [203, 300, 423], [203, 298, 438], [205, 340, 456], [205, 360, 468], [205, 578, 481], [205, 360, 492], [205, 400, 507], [203, 248, 527], [205, 228, 544], [212, 385, 557], [205, 228, 570], [210, 395, 585], [210, 405, 605], [210, 518, 620], [210, 505, 633], [210, 405, 648], [215, 240, 668], [215, 350, 679], [215, 240, 690], [215, 403, 702], [215, 240, 712], [215, 240, 722], [218, 410, 743]].forEach((l, i) => {
  const w = (l[1] - l[0]) / 3, n = Math.max(2, Math.round(w / 4));
  const t = (NOTE + NOTE).substr(i * 3 % NOTE.length, n);
  S.push(`<text class="txt-note" x="${(30 + l[0] / 3).toFixed(1)}" y="${(731.5 + l[2] / 3).toFixed(1)}" textLength="${w.toFixed(1)}" lengthAdjust="spacingAndGlyphs">${t}</text>`);
});
S.push('<rect x="145.7" y="988" width="128.3" height="43.7" class="ln-cad"/>');
[996.7, 1003, 1009, 1015, 1021.7, 1026.7].forEach(y => L(145.7, y, 274, y));
[157.7, 169, 180.7, 192.7, 204, 216, 250, 261.7].forEach(x => L(x, 996.7, x, 1031.7));
TX(233, 1014, 5, '结构设计总说明'); TX(240, 1001.5, 4.5, '工程名称'); TX(175, 1013, 4.5, '审核');

// edge of the next sheet on the right
S.push('<path class="ln-cad" d="M1570 605H1561V1040H1570M1566 612V680"/>');

// A0+(3/8), glyphs placed one by one and squeezed
const A0X = [694, 737, 774, 821, 849, 897, 933, 976].map(x => (x / .72).toFixed(1)).join(' ');
S.push(`<text class="txt-a0" transform="scale(.72 1)" x="${A0X}" y="420">A0+(3/8)</text>`);

// view cube
S.push(`<circle cx="1488" cy="231" r="50" fill="none" stroke="#2b2b2b" stroke-width="14"/>
<rect x="1464" y="207" width="49" height="49" fill="#9d9d9d"/><rect x="1473" y="216" width="30" height="30" fill="#8e8e92"/>
<path d="M1474.5 240.5H1502M1487.5 220V240" stroke="#3a3a3a" stroke-width="1.3" fill="none"/><path d="M1494 228h6l-3-3z" fill="#3a3a3a"/><path d="M1495 240h5" stroke="#ddd"/>
<text class="txt-cube" x="1488" y="186">北</text><text class="txt-cube" x="1488" y="292">南</text><text class="txt-cube" x="1435.5" y="239">西</text><text class="txt-cube" x="1541" y="239">东</text>
<rect x="1466.5" y="313.5" width="44" height="16" rx="4" fill="#6f6f78" stroke="#8d8d96"/><text x="1470" y="325.5" class="txt-wcs">WCS</text><path d="M1499 320h6l-3 3z" fill="#4b4b52"/>`);

// UCS icon
S.push(`<path d="M56 1139V1185H104" class="ln-cad"/><rect x="52.5" y="1180" width="8" height="9" class="ln-cad"/><text class="txt-ucs" x="57" y="1134">Y</text><text class="txt-ucs" x="107" y="1185">X</text>`);

const canvas = `<div class="cad-canvas"><svg width="1535" height="1055" viewBox="31 155 1535 1055">${S.join('')}</svg>
  <div class="cmd-float">
    <div class="cmd-hist d-flex flex-column align-items-start">
      <div class="cmd-line cmd-dim">当前设置: 编辑模式 = Multiple</div>
      <div class="cmd-line">选择注释对象或 [放弃(U)/模式(M)]:</div>
      <div class="cmd-line">选择注释对象或 [放弃(U)/模式(M)]: *取消*</div>
    </div>
    <div class="d-flex">
      <div class="cmd-tools d-flex align-items-center gap-1 ps-1"><span class="grip"></span>${svg('x')}${svg('wrench')}</div>
      <div class="cmd-input d-flex align-items-center ps-1">${svg('console')}<span class="caret-dn ms-1 me-1"></span><span>键入命令</span><span class="cmd-up"></span></div>
    </div>
  </div>
</div>`;

const layoutBar = row([[2, 1598, [
  [26, 'burger'], [68.5, 'txt', 51, '<div class="tab-on w-100">模型</div>'], T(117, 30, '布局1', 'title-txt'), T(142, 8, '/', 'slash'), [162, 'plus'], T(182, 8, '/', 'slash'),
]]], 'h-ltabs', '');

const status = row([
  [5, 458, []],
  [462, 593, [T(537.5, 103, '-334030, -131683, 0', 'title-txt')]],
  [595, 624, [T(609.5, 26, '模型', 'title-txt')]],
  [627, 687, [[638, 'grid'], [661, 'dots'], [679, 'v']]],
  [690, 835, [[702, 'snap'], [724, 'infer*'], [747, 'ortho'], [770, 'polar'], [789, 'v'], [808, 'osnap'], [827, 'v']]],
  [837, 1004, [[846, 'angle'], [869, 'iso*'], [888, 'v'], [907, 'lw'], [930, 'trans*'], [955, 'cycle'], [979, 'iso3d'], [996, 'v']]],
  [1006, 1104, [[1018, 'ucs*'], [1041, 'ucs2'], [1059, 'v'], [1078, 'gizmo*'], [1096, 'v']]],
  [1106, 1244, [[1119, 'anno*'], [1141, 'anno2'], [1163, 'anno3'], T(1204, 52, '1:1 / 100%', 'title-txt'), [1236, 'v']]],
  [1246, 1306, [[1257, 'gear'], [1276, 'v'], [1296, 'plus']]],
  [1308, 1400, [[1321, 'ruler'], T(1349, 24, '小数', 'title-txt'), [1393, 'v']]],
  [1402, 1424, [[1413, 'list']]],
  [1427, 1465, [[1438, 'wspace'], [1457, 'v']]],
  [1467, 1490, [[1478, 'hw']]],
  [1492, 1515, [[1503, 'isol*']]],
  [1517, 1543, [[1530, 'prop2']]],
  [1546, 1572, [[1559, 'full']]],
  [1574, 1596, [[1583, 'burger']]],
], 'status', 'stat-grp');

// ---- watermark over everything ----
const wm = [[22, 385], [570, 385], [1122, 385], [-122, 748], [413, 745], [965, 745], [1520, 745], [270, 1118], [815, 1118], [1365, 1118]]
  .map(p => `<text class="wm-txt" transform="translate(${p[0]} ${p[1]}) rotate(-45)">知末网www.znzmo.com</text>`).join('');

document.getElementById('win').innerHTML = `
  ${titleBar}${menuBar}<div class="menu-line"></div>${tabBar}
  <div class="tools">${row1}${row2}${row3}</div>
  <div class="cad-main d-flex">
    <div class="side-strip side-l">${leftBar}</div>
    ${canvas}
    <div class="side-strip side-r">${rightBar}</div>
  </div>
  <div class="strip"></div>
  ${layoutBar}${status}
  <svg class="wm-layer" width="1600" height="1270">${wm}</svg>
  <div class="stamp-cn">知末</div>
  <div class="stamp-id">ID: 1181350889</div>`;
</script>
</body>
</html>
